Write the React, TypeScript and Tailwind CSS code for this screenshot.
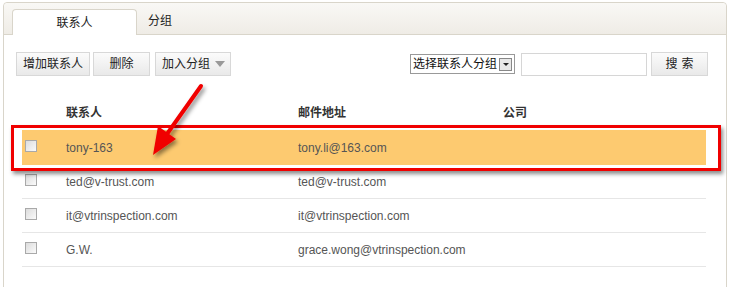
import { useState } from 'react';

type Contact = {
  id: number;
  name: string;
  email: string;
  company: string;
};

const contacts: Contact[] = [
  { id: 1, name: 'tony-163', email: 'tony.li@163.com', company: '' },
  { id: 2, name: 'ted@v-trust.com', email: 'ted@v-trust.com', company: '' },
  { id: 3, name: 'it@vtrinspection.com', email: 'it@vtrinspection.com', company: '' },
  { id: 4, name: 'G.W.', email: 'grace.wong@vtrinspection.com', company: '' },
];

const font = 'font-["Liberation_Sans","Noto_Sans_CJK_SC",sans-serif]';
const btn =
  'h-[24px] px-[6px] shrink-0 whitespace-nowrap border border-[#d8d8d8] bg-gradient-to-b from-[#fbfbfb] to-[#e9e9e9] text-[12px] text-[#222] flex items-center';

function Checkbox() {
  return (
    <span className="block w-[12px] h-[12px] -mt-[4px] border border-[#a9a9a9] bg-gradient-to-br from-[#dcdcdc] to-[#fafafa]" />
  );
}

export default function App() {
  const [tab, setTab] = useState(0);

  return (
    <div className={`relative w-[729px] h-[287px] overflow-hidden bg-white ${font}`}>
      <div className="ml-[3px] mt-[2px] w-[724px] h-[300px] border border-[#d9d5ca] rounded-t-[4px]">
        {/* 标签栏 */}
        <div className="h-[32px] flex items-end pl-[8px] bg-gradient-to-b from-[#f9f8f5] to-[#efece6] border-b border-[#d9d5ca] rounded-t-[4px]">
          <button
            onClick={() => setTab(0)}
            className={`w-[125px] h-[26px] -mb-px flex items-center justify-center text-[12px] text-[#222] rounded-t-[4px] ${
              tab === 0 ? 'bg-white border border-b-0 border-[#d9d5ca]' : ''
            }`}
          >
            联系人
          </button>
          <button
            onClick={() => setTab(1)}
            className="w-[46px] h-[26px] flex items-center justify-center text-[12px] text-[#222]"
          >
            分组
          </button>
        </div>

        {/* 工具栏 */}
        <div className="flex items-center justify-between pt-[17px] pl-[12px] pr-[18px]">
          <div className="flex items-center">
            <button className={btn}>增加联系人</button>
            <button className={`${btn} ml-[3px] w-[57px] justify-center`}>删除</button>
            <button className={`${btn} ml-[5px] w-[76px] gap-[5px] px-[5px]`}>
              加入分组
              <span className="w-0 h-0 border-l-[5px] border-r-[5px] border-t-[6px] border-l-transparent border-r-transparent border-t-[#999]" />
            </button>
          </div>
          <div className="flex items-center">
            <div className="h-[20px] shrink-0 whitespace-nowrap border border-[#999] flex items-center gap-[2px] pl-[2px] pr-[2px] text-[12px] text-[#111] bg-white">
              <span>选择联系人分组</span>
              <span className="w-[13px] h-[13px] border border-[#888] bg-[#e8e8e8] flex items-center justify-center">
                <span className="w-0 h-0 border-l-[3px] border-r-[3px] border-t-[3px] border-l-transparent border-r-transparent border-t-[#222]" />
              </span>
            </div>
            <input className="ml-[6px] h-[23px] w-[126px] border border-[#d6d6d6] outline-none" />
            <button className={`${btn} ml-[4px] w-[57px] justify-center tracking-[4px] pl-[10px]`}>搜索</button>
          </div>
        </div>

        {/* 联系人表格 */}
        <div className="mt-[20px] ml-[18px] w-[684px] text-[12px]">
          <div className="grid grid-cols-[44px_232px_205px_1fr] h-[34px] items-center font-bold text-[#333]">
            <span />
            <span>联系人</span>
            <span>邮件地址</span>
            <span>公司</span>
          </div>
          {contacts.map((c, i) => (
            <div
              key={c.id}
              className={`grid grid-cols-[44px_232px_205px_1fr] items-center text-[#555] ${
                i === 0 ? 'h-[35px] bg-[#fdca70]' : 'h-[34px] border-b border-[#e6e6e6]'
              }`}
            >
              <span className="pl-[3px]">
                <Checkbox />
              </span>
              <span>{c.name}</span>
              <span>{c.email}</span>
              <span>{c.company}</span>
            </div>
          ))}
        </div>
      </div>

      {/* 标注红框 */}
      <div className="absolute left-[11px] top-[125px] w-[710px] h-[46px] border-[3px] border-[#f00000] shadow-[2px_3px_4px_rgba(0,0,0,0.45)]" />

      {/* 标注箭头 */}
      <svg className="absolute left-0 top-0" width="729" height="287" viewBox="0 0 729 287">
        <defs>
          <filter id="sh" x="-50%" y="-50%" width="200%" height="200%">
            <feDropShadow dx="2" dy="3" stdDeviation="2" floodColor="#000" floodOpacity="0.45" />
          </filter>
        </defs>
        <g filter="url(#sh)">
          <line x1="201" y1="86" x2="167" y2="134" stroke="#f00000" strokeWidth="4" strokeLinecap="round" />
          <polygon points="153,155 158,126 176,139" fill="#f00000" />
        </g>
      </svg>
    </div>
  );
}
